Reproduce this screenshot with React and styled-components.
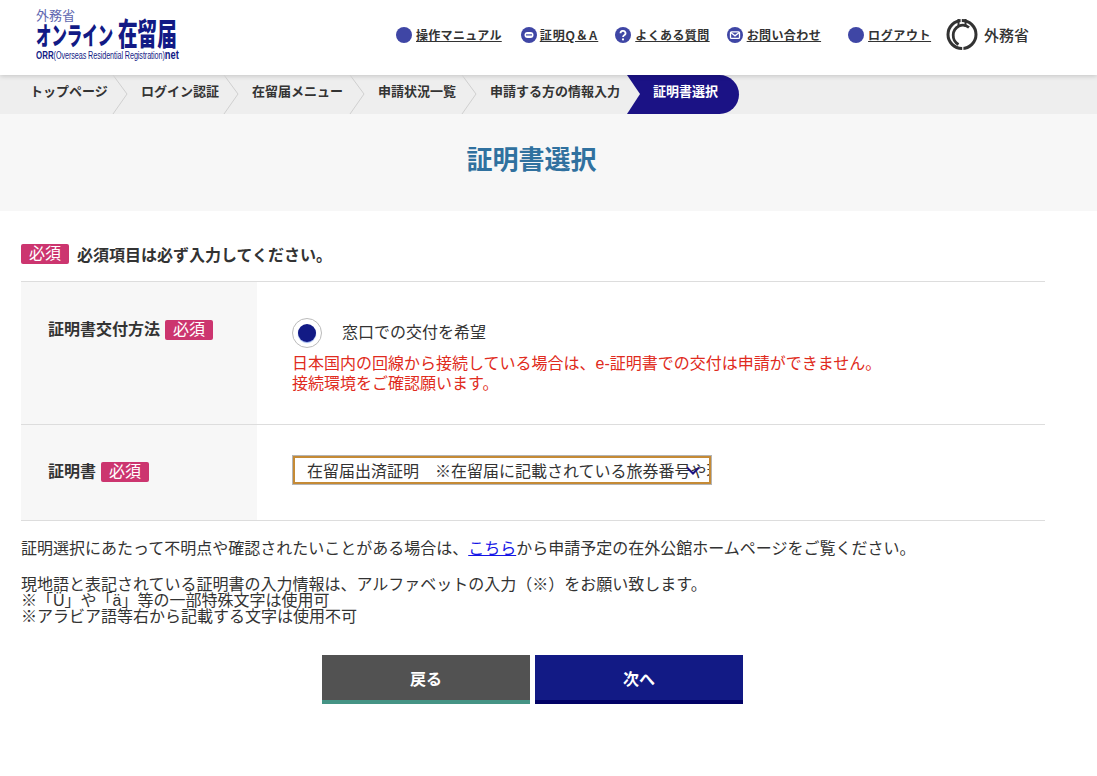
import React from 'react';
import styled, { createGlobalStyle } from 'styled-components';

const Global = createGlobalStyle`
  html, body { margin: 0; padding: 0; background: #fff; }
  body { font-family: "Liberation Sans", "Noto Sans CJK JP", sans-serif; color: #333; }
  * { box-sizing: border-box; }
`;
const Page = styled.div`width: 1097px; height: 776px; overflow: hidden;`;
const Header = styled.header`
  height: 75px; display: flex; align-items: flex-start; position: relative; z-index: 1;
  background: #fff; box-shadow: 0 1px 5px rgba(0,0,0,.18);
`;
const Logo = styled.div`width: 340px; flex: none; padding: 9px 0 0 36px; color: #121a85; line-height: 1; white-space: nowrap;`;
const LogoTop = styled.div`font-size: 13px; height: 13px; color: #6168b0;`;
const LogoMain = styled.div`
  display: flex; align-items: flex-end; height: 27px; margin-top: -2px; font-weight: 900; font-family: "Noto Sans CJK JP", sans-serif;
`;
const LogoKana = styled.span`
  font-size: 23px; width: 82px; flex: none; display: block; line-height: 24px; transform: scale(.67, 1.1); transform-origin: left bottom;
`;
const LogoKanji = styled.span`
  font-size: 28px; width: 60px; flex: none; display: block; line-height: 28px; transform: scale(.7, 1.1); transform-origin: left bottom;
`;
const LogoSub = styled.div`
  font-size: 11px; height: 13px; width: 200px; margin-top: 1px; transform: scaleX(.72); transform-origin: left;
  font-weight: 700; line-height: 13px;
`;
const LogoFine = styled.span`font-weight: 400; font-size: 10px; letter-spacing: -.1px;`;
const LogoNet = styled.span`font-size: 13px;`;
const TopNav = styled.nav`display: flex; align-items: center; padding: 18px 0 0 56px; height: 50px;`;
const NavLink = styled.a`
  display: flex; align-items: center; gap: ${p => p.$tg ?? 3}px; margin-right: ${p => p.$gap}px; font-size: 12px; font-weight: 700; color: #333;
  text-decoration: underline; white-space: nowrap; line-height: 16px; letter-spacing: ${p => p.$ls || 0}px; padding-top: 3px;
`;
const Dot = styled.svg`width: 16px; height: 16px; flex: none; margin-top: -2px;`;
const Ministry = styled.div`display: flex; align-items: center; gap: 6px; font-size: 15px; font-weight: 500; color: #333; white-space: nowrap;`;
const Emblem = styled.svg`width: 32px; height: 32px; flex: none;`;

const Crumbs = styled.ol`display: flex; height: 39px; margin: 0; padding: 0; list-style: none; background: #eee;`;
const Crumb = styled.li`
  position: relative; width: ${p => p.$w}px; padding-left: ${p => p.$pl}px; font-size: 13px; font-weight: 700; line-height: 33px; color: #333; white-space: nowrap;
`;
const Chevron = styled.svg`position: absolute; right: -15px; top: 0; width: 16px; height: 39px; z-index: 1;`;
const ActiveCrumb = styled.li`
  position: relative; width: 112px; height: 39px; padding-left: 26px; margin-left: -1px; background: #1b1285; color: #fff;
  font-size: 13px; font-weight: 700; line-height: 33px; white-space: nowrap; border-radius: 0 20px 20px 0;
`;
const Notch = styled.svg`position: absolute; left: 0; top: 0; width: 14px; height: 39px;`;
const TitleBand = styled.div`height: 97px; background: #f7f7f7; display: flex; justify-content: center; padding: 29px 34px 0 0;`;
const Title = styled.h1`margin: 0; font-size: 26px; line-height: 34px; color: #30719f; font-weight: 700;`;

const Main = styled.main`width: 1024px; margin-left: 21px; padding-top: 33px;`;
const Note = styled.div`display: flex; align-items: center; gap: 8px; height: 20px; margin-bottom: 17px; font-size: 16px; font-weight: 700; color: #333;`;
const Badge = styled.span`
  display: inline-block; width: 48px; height: 20px; border-radius: 2px; background: #cc356f; color: #fff; font-size: 16px; font-weight: 400; line-height: 19px; text-align: center; flex: none;
`;
const Row = styled.div`display: grid; grid-template-columns: 236px 1fr; height: ${p => p.$h}px; border-top: 1px solid #ddd; ${p => p.$last && 'border-bottom: 1px solid #ddd;'}`;
const Label = styled.div`
  background: #f7f7f7; display: flex; align-items: flex-start; gap: 5px; padding: ${p => p.$pt}px 0 0 27px; font-size: 16px; font-weight: 700; color: #333; line-height: 20px;
`;
const Field = styled.div`padding: ${p => p.$pt}px 0 0 35px;`;
const RadioRow = styled.label`display: flex; align-items: center; gap: 20px; font-size: 16px; height: 30px; line-height: 28px; color: #333;`;
const Radio = styled.span`
  width: 30px; height: 30px; border-radius: 50%; border: 1px solid #bbb; background: #fff; display: flex; align-items: center; justify-content: center; flex: none;
  &::after { content: ""; width: 18px; height: 18px; border-radius: 50%; background: #121a85; box-shadow: 0 1px 1px #8fa8e8; }
`;
const Warning = styled.p`margin: 6px 0 0; font-size: 16px; line-height: 20px; color: #e02b20;`;
const Select = styled.div`
  position: relative; width: 418px; height: 28px; margin-left: 1px; border: 2px solid #c58a35; box-shadow: 0 0 0 1px #b5b5b5;
  padding-left: 12px; font-size: 16px; line-height: 27px; color: #333; white-space: nowrap; overflow: hidden; background: #fff;
`;
const Caret = styled.svg`position: absolute; right: 9px; top: 8px; width: 14px; height: 9px;`;
const Body = styled.p`margin: 0; font-size: 16px; line-height: 16px; color: #333;`;
const Intro = styled(Body)`padding-top: 20px; height: 56px;`;
const Link = styled.a`color: #1515e6; text-decoration: underline;`;
const Buttons = styled.div`display: flex; gap: 5px; margin-top: 30px; padding-left: 301px;`;
const Button = styled.button`
  width: 208px; height: 49px; border: 0; border-bottom: 4px solid ${p => p.$edge}; background: ${p => p.$bg}; color: #fff;
  font: 700 16px "Liberation Sans", "Noto Sans CJK JP", sans-serif; padding: 0;
`;

const Ic = ({ children }) => (
  <Dot viewBox="0 0 16 16"><circle cx="8" cy="8" r="8" fill="#3f46a5" />{children}</Dot>
);
const Chev = () => (
  <Chevron viewBox="0 0 16 39"><path d="M1 0 L15 19 L1 39" fill="none" stroke="#cfcfcf" strokeWidth="1" /></Chevron>
);

export default function App() {
  return (
    <Page>
      <Global />
      <Header>
        <Logo>
          <LogoTop>外務省</LogoTop>
          <LogoMain><LogoKana>オンライン</LogoKana><LogoKanji>在留届</LogoKanji></LogoMain>
          <LogoSub>ORR<LogoFine>(Overseas Residential Registration)</LogoFine><LogoNet>net</LogoNet></LogoSub>
        </Logo>
        <TopNav>
          <NavLink $gap={19} $ls={0.3} $tg={4}><Ic />操作マニュアル</NavLink>
          <NavLink $gap={17} $ls={0.9}><Ic><rect x="3.5" y="5" width="9" height="6" rx="3" fill="#fff" /><rect x="5" y="7.3" width="6" height="1.2" fill="#3f46a5" /></Ic>証明Q＆A</NavLink>
          <NavLink $gap={17} $ls={0.4} $tg={4}><Ic><path d="M5.5 6.2a2.5 2.3 0 1 1 3.7 2c-.8.5-1.2.9-1.2 1.8" fill="none" stroke="#fff" strokeWidth="1.8" /><circle cx="8" cy="12.4" r="1.1" fill="#fff" /></Ic>よくある質問</NavLink>
          <NavLink $gap={27} $ls={0.4} $tg={4}><Ic><rect x="3.5" y="4.8" width="9" height="6.6" rx="1" fill="none" stroke="#fff" strokeWidth="1.3" /><path d="M3.8 5.5 L8 8.8 L12.2 5.5" fill="none" stroke="#fff" strokeWidth="1.3" /></Ic>お問い合わせ</NavLink>
          <NavLink $gap={15} $ls={0.6} $tg={4}><Ic />ログアウト</NavLink>
          <Ministry>
            <Emblem viewBox="0 0 32 32">
              <circle cx="16" cy="16.5" r="14" fill="none" stroke="#333" strokeWidth="3" />
              <path d="M15.2 0 V9 M16.8 24 V32" stroke="#fff" strokeWidth="1.2" fill="none" />
              <path d="M12.5 1 V8 M19.5 1 V9" stroke="#333" strokeWidth="2" fill="none" />
              <path d="M23 9.5 A10 10 0 0 0 13 8 A10.5 10.5 0 0 0 12.5 26.5" fill="none" stroke="#333" strokeWidth="2.8" />
              <path d="M19 26.5 A10.5 10.5 0 0 0 25.5 16" fill="none" stroke="#fff" strokeWidth="1" />
            </Emblem>
            外務省
          </Ministry>
        </TopNav>
      </Header>
      <Crumbs>
        <Crumb $w={113} $pl={30}>トップページ<Chev /></Crumb>
        <Crumb $w={111} $pl={28}>ログイン認証<Chev /></Crumb>
        <Crumb $w={126} $pl={28}>在留届メニュー<Chev /></Crumb>
        <Crumb $w={112} $pl={28}>申請状況一覧<Chev /></Crumb>
        <Crumb $w={166} $pl={28}>申請する方の情報入力</Crumb>
        <ActiveCrumb>
          <Notch viewBox="0 0 14 39"><path d="M0 0 L13 19 L0 39 Z" fill="#eee" /></Notch>
          証明書選択
        </ActiveCrumb>
      </Crumbs>
      <TitleBand><Title>証明書選択</Title></TitleBand>
      <Main>
        <Note><Badge>必須</Badge>必須項目は必ず入力してください。</Note>
        <Row $h={143}>
          <Label $pt={38}>証明書交付方法<Badge>必須</Badge></Label>
          <Field $pt={36}>
            <RadioRow><Radio />窓口での交付を希望</RadioRow>
            <Warning>日本国内の回線から接続している場合は、e-証明書での交付は申請ができません。<br />接続環境をご確認願います。</Warning>
          </Field>
        </Row>
        <Row $h={97} $last>
          <Label $pt={37}>証明書<Badge>必須</Badge></Label>
          <Field $pt={31}>
            <Select>
              在留届出済証明　※在留届に記載されている旅券番号や現地語
              <Caret viewBox="0 0 14 9"><path d="M1 1.5 L7 7.5 L13 1.5" fill="none" stroke="#1b1285" strokeWidth="2" /></Caret>
            </Select>
          </Field>
        </Row>
        <Intro>証明選択にあたって不明点や確認されたいことがある場合は、<Link>こちら</Link>から申請予定の在外公館ホームページをご覧ください。</Intro>
        <Body>現地語と表記されている証明書の入力情報は、アルファベットの入力（※）をお願い致します。<br />※「Ü」や「ä」等の一部特殊文字は使用可<br />※アラビア語等右から記載する文字は使用不可</Body>
        <Buttons>
          <Button $bg="#525252" $edge="#459485">戻る</Button>
          <Button $bg="#121a85" $edge="#020266">次へ</Button>
        </Buttons>
      </Main>
    </Page>
  );
}
